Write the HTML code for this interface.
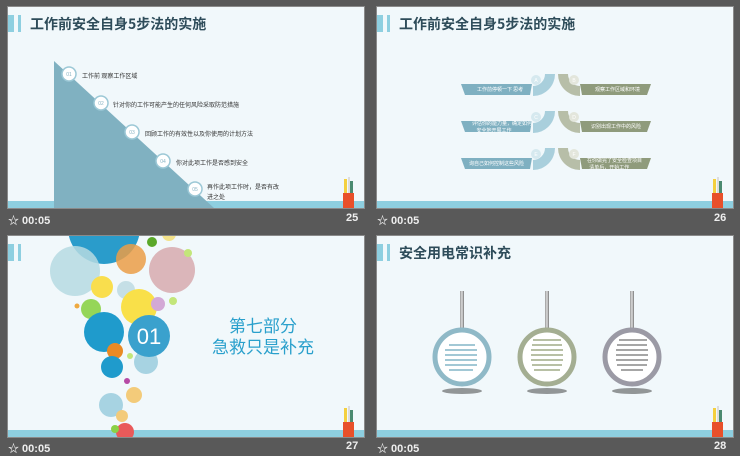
<!DOCTYPE html>
<html><head><meta charset="utf-8"><style>
body{margin:0;width:740px;height:452px;background:#595959;position:relative;overflow:hidden;font-family:"Liberation Sans","Noto Sans CJK SC",sans-serif}
.s{position:absolute;width:356px;height:201px;background:#f1f8fb;border:1px solid #8a8a8a;overflow:hidden}
.band{position:absolute;left:0;bottom:0;width:100%;height:7px;background:#8ecfe0}
.b1{position:absolute;left:0;top:8px;width:6px;height:17px;background:#8ecfe0}
.b2{position:absolute;left:10px;top:8px;width:3px;height:17px;background:#8ecfe0}
.t{position:absolute;left:22px;top:7px;font-size:14px;font-weight:bold;color:#2e4c5a;font-family:"Noto Sans CJK SC",sans-serif}
.ft{position:absolute;color:#eee;font-size:11px;font-weight:bold}
.sm{position:absolute;font-size:6px;color:#333;font-family:"Noto Sans CJK SC",sans-serif;white-space:nowrap}
.w{font-size:5px;color:#fff}
svg{position:absolute;left:0;top:0}
</style></head><body>

<!-- slide 25 -->
<div class="s" style="left:7px;top:6px">
<div class="band"></div>
<svg width="356" height="201"><polygon points="46,54 46,201 206,201" fill="#80b1c1"/>
<g fill="#fff" stroke="#9cc8d6" stroke-width="1.5">
<circle cx="61" cy="67" r="7"/><circle cx="93" cy="96" r="7"/><circle cx="124" cy="125" r="7"/><circle cx="155" cy="154" r="7"/><circle cx="187" cy="182" r="7"/></g>
<g fill="#8ab5c4" font-size="5" text-anchor="middle"><text x="61" y="69">01</text><text x="93" y="98">02</text><text x="124" y="127">03</text><text x="155" y="156">04</text><text x="187" y="184">05</text></g>
<g transform="translate(335,170)"><rect x="0" y="16" width="11" height="15" fill="#e8502a"/><rect x="1" y="2" width="3" height="14" fill="#f4d03f"/><rect x="5" y="0" width="2" height="16" fill="#ddd"/><rect x="7" y="4" width="3" height="12" fill="#4a8a70"/></g>
</svg>
<div class="sm" style="left:74px;top:64px">工作前 观察工作区域</div>
<div class="sm" style="left:105px;top:93px">针对你的工作可能产生的任何风险采取防范措施</div>
<div class="sm" style="left:137px;top:122px">回顾工作的有效性以及你使用的计划方法</div>
<div class="sm" style="left:168px;top:151px">你对此项工作是否感到安全</div>
<div class="sm" style="left:199px;top:175px;line-height:10px">再作此项工作时，是否有改<br>进之处</div>
<div class="b1"></div><div class="b2"></div><div class="t">工作前安全自身5步法的实施</div>
</div>
<div class="ft" style="left:8px;top:212px">☆ 00:05</div><div class="ft" style="left:346px;top:212px">25</div>

<!-- slide 26 -->
<div class="s" style="left:376px;top:6px">
<div class="band"></div>
<svg width="356" height="201">
<g id="row">
<polygon points="84,77 155,77 153,88 88,88" fill="#7fb0c1"/>
<path d="M155,67 h23 a22 22 0 0 1 -22 22 v-10 a12 12 0 0 0 12 -12z" fill="#a9cfdc"/>
<circle cx="159" cy="73" r="5" fill="#d6e9ef"/>
<path d="M181,67 h10 a12 12 0 0 0 12 12 v10 a22 22 0 0 1 -22 -22z" fill="#b7bea8"/>
<polygon points="203,77 274,77 270,88 205,88" fill="#8f9b7c"/>
<circle cx="197" cy="73" r="5" fill="#e3e6dc"/>
</g>
<use href="#row" y="37"/><use href="#row" y="74"/>
<g fill="#fff" font-size="5" text-anchor="middle"><text x="159" y="75">A</text><text x="197" y="75">B</text><text x="159" y="112">C</text><text x="197" y="112">D</text><text x="159" y="149">E</text><text x="197" y="149">F</text></g>
<g transform="translate(335,170)"><rect x="0" y="16" width="11" height="15" fill="#e8502a"/><rect x="1" y="2" width="3" height="14" fill="#f4d03f"/><rect x="5" y="0" width="2" height="16" fill="#ddd"/><rect x="7" y="4" width="3" height="12" fill="#4a8a70"/></g>
</svg>
<div class="sm w" style="left:100px;top:79px">工作前停顿一下 思考</div>
<div class="sm w" style="left:218px;top:79px">观察工作区域和环境</div>
<div class="sm w" style="left:95px;top:113px;line-height:7px">评估你的能力量，确定如何<br>&nbsp;&nbsp;&nbsp;&nbsp;安全地开展工作</div>
<div class="sm w" style="left:214px;top:116px">识别出现工作中的风险</div>
<div class="sm w" style="left:92px;top:153px">询自己如何控制这些风险</div>
<div class="sm w" style="left:210px;top:150px;line-height:7px">在你做完了安全检查项目<br>&nbsp;&nbsp;清单后，开始工作</div>
<div class="b1"></div><div class="b2"></div><div class="t">工作前安全自身5步法的实施</div>
</div>
<div class="ft" style="left:377px;top:212px">☆ 00:05</div><div class="ft" style="left:714px;top:212px">26</div>

<!-- slide 27 -->
<div class="s" style="left:7px;top:235px">
<div class="band"></div>
<svg width="356" height="201">
<circle cx="96" cy="-8" r="36" fill="#2a9ccb"/>
<circle cx="67" cy="35" r="25" fill="#b6dbe2" opacity=".85"/>
<circle cx="123" cy="23" r="15" fill="#eb9d47" opacity=".85"/>
<circle cx="144" cy="6" r="5" fill="#5aa82a"/>
<circle cx="161" cy="-2" r="7" fill="#f3e28a"/>
<circle cx="164" cy="34" r="23" fill="#dbb6ba"/>
<circle cx="180" cy="17" r="4" fill="#c3e67a"/>
<circle cx="94" cy="51" r="11" fill="#f9de4d"/>
<circle cx="118" cy="54" r="9" fill="#c5dfe6"/>
<circle cx="131" cy="71" r="18" fill="#f9e049"/>
<circle cx="150" cy="68" r="7" fill="#d3a9d6"/>
<circle cx="165" cy="65" r="4" fill="#c3e67a"/>
<circle cx="83" cy="73" r="10" fill="#8bd146" opacity=".9"/>
<circle cx="69" cy="70" r="2.5" fill="#eea940"/>
<circle cx="96" cy="96" r="20" fill="#1f9bcc"/>
<circle cx="107" cy="115" r="8" fill="#e98a24"/>
<circle cx="104" cy="131" r="11" fill="#1f9bcc"/>
<circle cx="138" cy="126" r="12" fill="#a7d3e2"/>
<circle cx="122" cy="120" r="3" fill="#c3e67a"/>
<circle cx="119" cy="145" r="3" fill="#b64aa5"/>
<circle cx="126" cy="159" r="8" fill="#f3cb7a"/>
<circle cx="103" cy="169" r="12" fill="#a7d3e2"/>
<circle cx="114" cy="180" r="6" fill="#f3cb7a"/>
<circle cx="117" cy="196" r="9" fill="#e95a5a"/>
<circle cx="107" cy="193" r="4" fill="#8bd146"/>
<circle cx="141" cy="100" r="21" fill="#3aa1cd"/>
<text x="141" y="108" fill="#fff" font-size="22" text-anchor="middle" font-family="Liberation Sans">01</text>
<g transform="translate(335,170)"><rect x="0" y="16" width="11" height="15" fill="#e8502a"/><rect x="1" y="2" width="3" height="14" fill="#f4d03f"/><rect x="5" y="0" width="2" height="16" fill="#ddd"/><rect x="7" y="4" width="3" height="12" fill="#4a8a70"/></g>
</svg>
<div style="position:absolute;left:195px;top:78px;width:120px;text-align:center;color:#2aa0cc;font-size:17px;line-height:21px;font-family:'Noto Sans CJK SC',sans-serif">第七部分<br>急救只是补充</div>
<div class="b1"></div><div class="b2"></div>
</div>
<div class="ft" style="left:8px;top:440px">☆ 00:05</div><div class="ft" style="left:346px;top:440px">27</div>

<!-- slide 28 -->
<div class="s" style="left:376px;top:235px">
<div class="band"></div>
<svg width="356" height="201">
<defs><linearGradient id="rod" x1="0" x2="1"><stop offset="0" stop-color="#999"/><stop offset=".5" stop-color="#ddd"/><stop offset="1" stop-color="#777"/></linearGradient></defs>
<g>
<rect x="83" y="55" width="4" height="45" fill="url(#rod)"/><ellipse cx="85" cy="155" rx="20" ry="3" fill="#333" opacity=".5"/>
<circle cx="85" cy="121" r="27" fill="#fff" stroke="#8fb9c7" stroke-width="5"/>
<rect x="168" y="55" width="4" height="45" fill="url(#rod)"/><ellipse cx="170" cy="155" rx="20" ry="3" fill="#333" opacity=".5"/>
<circle cx="170" cy="121" r="27" fill="#fff" stroke="#a4ae92" stroke-width="5"/>
<rect x="253" y="55" width="4" height="45" fill="url(#rod)"/><ellipse cx="255" cy="155" rx="20" ry="3" fill="#333" opacity=".5"/>
<circle cx="255" cy="121" r="27" fill="#fff" stroke="#9b9aa5" stroke-width="5"/>
</g>
<g stroke-width="1.3" opacity=".75">
<g stroke="#3a8aa6"><path d="M72 109h26M68 114h32M68 119h32M68 124h32M68 129h32M72 134h24"/></g>
<g stroke="#6a7a40"><path d="M156 104h28M155 109h30M154 114h32M154 119h32M154 124h32M155 129h30M157 134h26"/></g>
<g stroke="#444"><path d="M242 104h28M240 109h30M239 114h32M239 119h32M239 124h32M240 129h30M244 134h22"/></g>
</g>
<g transform="translate(335,170)"><rect x="0" y="16" width="11" height="15" fill="#e8502a"/><rect x="1" y="2" width="3" height="14" fill="#f4d03f"/><rect x="5" y="0" width="2" height="16" fill="#ddd"/><rect x="7" y="4" width="3" height="12" fill="#4a8a70"/></g>
</svg>
<div class="b1"></div><div class="b2"></div><div class="t">安全用电常识补充</div>
</div>
<div class="ft" style="left:377px;top:440px">☆ 00:05</div><div class="ft" style="left:714px;top:440px">28</div>
</body></html>
